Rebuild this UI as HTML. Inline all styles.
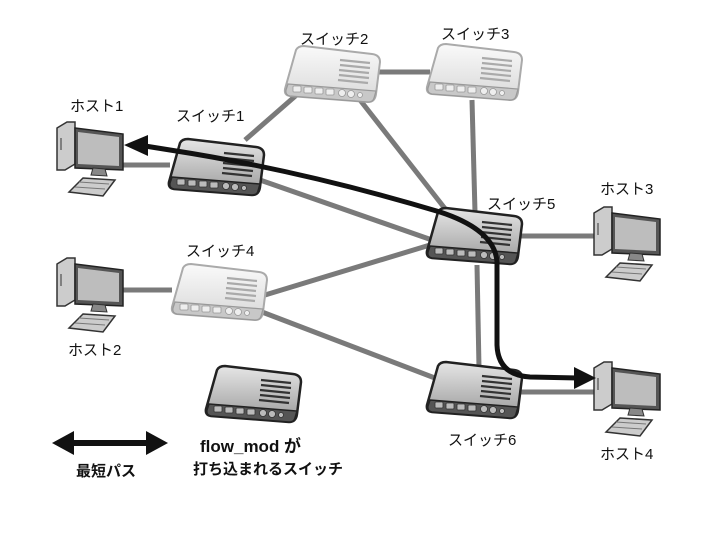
<!DOCTYPE html>
<html><head><meta charset="utf-8"><style>
html,body{margin:0;padding:0;background:#fff;}
svg{display:block;}
text{font-family:"Liberation Sans","Noto Sans CJK JP",sans-serif;fill:#111;}
</style></head><body>
<svg width="720" height="540" viewBox="0 0 720 540" xmlns="http://www.w3.org/2000/svg">
<defs>
<linearGradient id="gd" x1="0" y1="0" x2="0" y2="1"><stop offset="0" stop-color="#e6e6e6"/><stop offset="1" stop-color="#9a9a9a"/></linearGradient>
<linearGradient id="gl" x1="0" y1="0" x2="0" y2="1"><stop offset="0" stop-color="#fafafa"/><stop offset="1" stop-color="#d8d8d8"/></linearGradient>
<g id="swd">
  <path d="M12,4 Q14,0 20,0 L88,8 Q96,9 96,16 L92,48 Q91,56 84,56 L6,50 Q0,49 1,43 Z" fill="url(#gd)" stroke="#222" stroke-width="2.5"/>
  <path d="M4,38 L92,45 L90,52 Q89,56 84,56 L6,50 Q1,49 2,44 Z" fill="#555" stroke="#222" stroke-width="1.5"/>
  <g fill="#bbb" stroke="#333" stroke-width="0.8"><rect x="9" y="40" width="8" height="6" rx="1"/><rect x="20" y="41" width="8" height="6" rx="1"/><rect x="31" y="42" width="8" height="6" rx="1"/><rect x="42" y="43" width="8" height="6" rx="1"/><circle cx="58" cy="47" r="3.5"/><circle cx="67" cy="48" r="3.5"/><circle cx="76" cy="49" r="2.5"/></g>
  <g stroke="#333" stroke-width="2.2"><line x1="56" y1="14" x2="86" y2="17"/><line x1="56" y1="19" x2="86" y2="22"/><line x1="55" y1="24" x2="85" y2="27"/><line x1="55" y1="29" x2="85" y2="32"/><line x1="54" y1="34" x2="84" y2="37"/></g>
</g>
<g id="swl">
  <path d="M12,4 Q14,0 20,0 L88,8 Q96,9 96,16 L92,48 Q91,56 84,56 L6,50 Q0,49 1,43 Z" fill="url(#gl)" stroke="#aaa" stroke-width="2"/>
  <path d="M4,38 L92,45 L90,52 Q89,56 84,56 L6,50 Q1,49 2,44 Z" fill="#c8c8c8" stroke="#999" stroke-width="1.2"/>
  <g fill="#eee" stroke="#999" stroke-width="0.8"><rect x="9" y="40" width="8" height="6" rx="1"/><rect x="20" y="41" width="8" height="6" rx="1"/><rect x="31" y="42" width="8" height="6" rx="1"/><rect x="42" y="43" width="8" height="6" rx="1"/><circle cx="58" cy="47" r="3.5"/><circle cx="67" cy="48" r="3.5"/><circle cx="76" cy="49" r="2.5"/></g>
  <g stroke="#aaa" stroke-width="2.2"><line x1="56" y1="14" x2="86" y2="17"/><line x1="56" y1="19" x2="86" y2="22"/><line x1="55" y1="24" x2="85" y2="27"/><line x1="55" y1="29" x2="85" y2="32"/><line x1="54" y1="34" x2="84" y2="37"/></g>
</g>
<g id="host">
  <path d="M2,8 L12,2 L20,2 L20,44 L10,50 L2,50 Z" fill="#ccc" stroke="#333" stroke-width="1.5"/>
  <line x1="6" y1="18" x2="6" y2="30" stroke="#666" stroke-width="1.5"/>
  <path d="M20,8 L68,14 L68,50 L20,48 Z" fill="#555" stroke="#222" stroke-width="1.5"/>
  <path d="M23,12 L64,17 L64,46 L23,44 Z" fill="#bdbdbd"/>
  <path d="M38,48 L50,49 L52,56 L36,55 Z" fill="#888" stroke="#333"/>
  <path d="M28,58 L60,60 L48,76 L14,72 Z" fill="#ccc" stroke="#333" stroke-width="1.5"/>
  <g stroke="#777" stroke-width="1"><line x1="24" y1="62" x2="54" y2="64"/><line x1="20" y1="67" x2="50" y2="69"/></g>
</g>
</defs>

<g stroke="#7a7a7a" stroke-width="5" fill="none">
  <line x1="120" y1="165" x2="170" y2="165"/>
  <line x1="120" y1="290" x2="172" y2="290"/>
  <line x1="245" y1="140" x2="300" y2="92"/>
  <line x1="375" y1="72" x2="430" y2="72"/>
  <line x1="360" y1="100" x2="450" y2="215"/>
  <line x1="472" y1="100" x2="475" y2="212"/>
  <line x1="260" y1="180" x2="432" y2="240"/>
  <line x1="265" y1="295" x2="430" y2="245"/>
  <line x1="262" y1="312" x2="440" y2="380"/>
  <line x1="477" y1="265" x2="479" y2="368"/>
  <line x1="518" y1="236" x2="598" y2="236"/>
  <line x1="518" y1="392" x2="598" y2="392"/>
</g>

<use href="#swl" x="284" y="46"/>
<use href="#swl" x="426" y="44"/>
<use href="#swl" x="171" y="264"/>
<use href="#swd" x="168" y="139"/>
<use href="#swd" x="426" y="208"/>
<use href="#swd" x="426" y="362"/>
<use href="#swd" x="205" y="366"/>

<use href="#host" x="55" y="120"/>
<use href="#host" x="55" y="256"/>
<use href="#host" x="592" y="205"/>
<use href="#host" x="592" y="360"/>

<path d="M145,146 L170,150 Q300,170 440,212 Q495,230 497,262 L497,345 Q498,375 530,377 L578,378" fill="none" stroke="#111" stroke-width="5"/>
<polygon points="124,145 148,135 148,156" fill="#111"/>
<polygon points="596,378 574,367 574,389" fill="#111"/>

<line x1="68" y1="443" x2="152" y2="443" stroke="#111" stroke-width="6"/>
<polygon points="52,443 74,431 74,455" fill="#111"/>
<polygon points="168,443 146,431 146,455" fill="#111"/>

<g font-size="15">
<text x="70" y="111">ホスト1</text>
<text x="176" y="121">スイッチ1</text>
<text x="300" y="44">スイッチ2</text>
<text x="441" y="39">スイッチ3</text>
<text x="487" y="209">スイッチ5</text>
<text x="600" y="194">ホスト3</text>
<text x="186" y="256">スイッチ4</text>
<text x="68" y="355">ホスト2</text>
<text x="448" y="445">スイッチ6</text>
<text x="600" y="459">ホスト4</text>
</g>
<g font-size="15" font-weight="bold">
<text x="76" y="476">最短パス</text>
<text x="200" y="452" font-size="17">flow_mod が</text>
<text x="193" y="474">打ち込まれるスイッチ</text>
</g>
</svg>
</body></html>
